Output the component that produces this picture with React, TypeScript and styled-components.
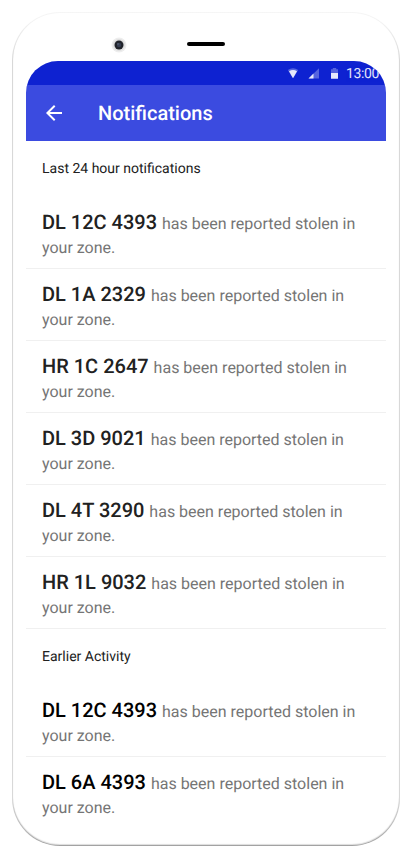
import React from "react";
import styled, { createGlobalStyle } from "styled-components";

const GlobalStyle = createGlobalStyle`
  * { box-sizing: border-box; }
  body {
    margin: 0;
    background: #fff;
    font-family: Roboto, "Liberation Sans", sans-serif;
    text-rendering: geometricPrecision;
  }
`;

const Page = styled.main`
  width: 416px;
  height: 858px;
  padding: 12px;
  background: #fff;
  overflow: hidden;
`;

const Phone = styled.div`
  width: 388px;
  height: 834px;
  padding: 0 13px;
  border: 1px solid transparent;
  border-radius: 48px;
  background: linear-gradient(#fff, #fff) padding-box,
    linear-gradient(#f6f6f6, #efefef 16px, #d8d8d8 48px, #d8d8d8 786px, #b4b4b4 818px, #a2a2a2) border-box;
  box-shadow: inset 0 -1px 1px rgba(0, 0, 0, 0.14);
`;

const Bezel = styled.div`
  height: 48px;
  padding: 25px 0 0 86px;
  display: flex;
  align-items: flex-start;
`;

const Camera = styled.svg`
  width: 14px;
  height: 14px;
  display: block;
  overflow: visible;
`;

const Speaker = styled.div`
  width: 38px;
  height: 4px;
  margin: 4px 0 0 61px;
  border-radius: 2px;
  background: #000;
`;

const Screen = styled.div`
  width: 360px;
  border-radius: 32px 32px 0 0;
  overflow: hidden;
`;

const StatusBar = styled.div`
  height: 24px;
  padding-left: 261px;
  display: flex;
  align-items: center;
  background: #0e22d1;
  color: #fff;
`;

const StatusIcons = styled.svg`
  width: 59px;
  height: 24px;
  flex: none;
`;

const Clock = styled.span`
  padding-top: 1px;
  font-size: 14px;
  line-height: 24px;
  letter-spacing: -0.35px;
  opacity: 0.88;
`;

const AppBar = styled.header`
  height: 56px;
  padding-left: 16px;
  display: flex;
  align-items: center;
  background: #3b4be0;
  color: #fff;
`;

const BackButton = styled.button`
  width: 24px;
  height: 24px;
  margin: 0 32px 0 0;
  padding: 0;
  border: 0;
  background: none;
  color: inherit;
`;

const Title = styled.h1`
  margin: 0;
  font-size: 20px;
  line-height: 24px;
  font-weight: 500;
`;

const SectionTitle = styled.h2`
  margin: 0;
  height: 56px;
  padding: 16px 16px 0;
  font-size: 14px;
  line-height: 24px;
  font-weight: 400;
  color: #212121;
`;

const List = styled.ul`
  margin: 0;
  padding: 0;
  list-style: none;
`;

const Row = styled.li<{ $line: boolean }>`
  height: 72px;
  padding: 13px 16px 0;
  border-bottom: ${(p) => (p.$line ? "1px solid #f0f0f0" : "0")};
  font-size: 16px;
  line-height: 24px;
  color: #757575;
`;

const Plate = styled.strong<{ $tone: string }>`
  font-size: 20px;
  line-height: 24px;
  font-weight: 500;
  color: ${(p) => p.$tone};
`;

const sections = [
  {
    title: "Last 24 hour notifications",
    tone: "#212121",
    plates: ["DL 12C 4393", "DL 1A 2329", "HR 1C 2647", "DL 3D 9021", "DL 4T 3290", "HR 1L 9032"],
    closed: true,
  },
  { title: "Earlier Activity", tone: "#000", plates: ["DL 12C 4393", "DL 6A 4393"], closed: false },
];

export default function App() {
  return (
    <Page>
      <GlobalStyle />
      <Phone>
        <Bezel>
          <Camera viewBox="0 0 14 14">
            <circle cx="7" cy="7" r="7.5" fill="#ededed" />
            <circle cx="7" cy="7" r="6" fill="#dedede" />
            <circle cx="7" cy="7" r="4.5" fill="#20232a" />
            <circle cx="7" cy="7" r="2.2" fill="#363e50" />
            <circle cx="6" cy="6" r="0.7" fill="#69758a" />
          </Camera>
          <Speaker />
        </Bezel>
        <Screen>
          <StatusBar>
            <StatusIcons viewBox="0 0 59 24" fill="#fff">
              <path d="M.8 9Q6 5.4 11.2 9L6 17.3Z" opacity=".3" />
              <path d="M2 10.2Q6 8 10 10.2L6 17.3Z" opacity=".85" />
              <path d="M21.5 17.5L32 7.3V17.5Z" opacity=".3" />
              <path d="M21.5 17.5L26.5 12.6V17.5Z" opacity=".85" />
              <path d="M44 12V8.2H45.8V7H49.2V8.2H51V12Z" opacity=".3" />
              <path d="M44 12H51V17.8H44Z" opacity=".9" />
            </StatusIcons>
            <Clock>13:00</Clock>
          </StatusBar>
          <AppBar>
            <BackButton aria-label="Back">
              <svg width="24" height="24" viewBox="0 0 24 24" fill="currentColor" display="block">
                <path d="M20 11H7.83l5.59-5.59L12 4l-8 8 8 8 1.41-1.41L7.83 13H20v-2z" />
              </svg>
            </BackButton>
            <Title>Notifications</Title>
          </AppBar>
          {sections.map((s) => (
            <section key={s.title}>
              <SectionTitle>{s.title}</SectionTitle>
              <List>
                {s.plates.map((p, i) => (
                  <Row key={p} $line={s.closed || i < s.plates.length - 1}>
                    <Plate $tone={s.tone}>{p} </Plate>has been reported stolen in your zone.
                  </Row>
                ))}
              </List>
            </section>
          ))}
        </Screen>
      </Phone>
    </Page>
  );
}
